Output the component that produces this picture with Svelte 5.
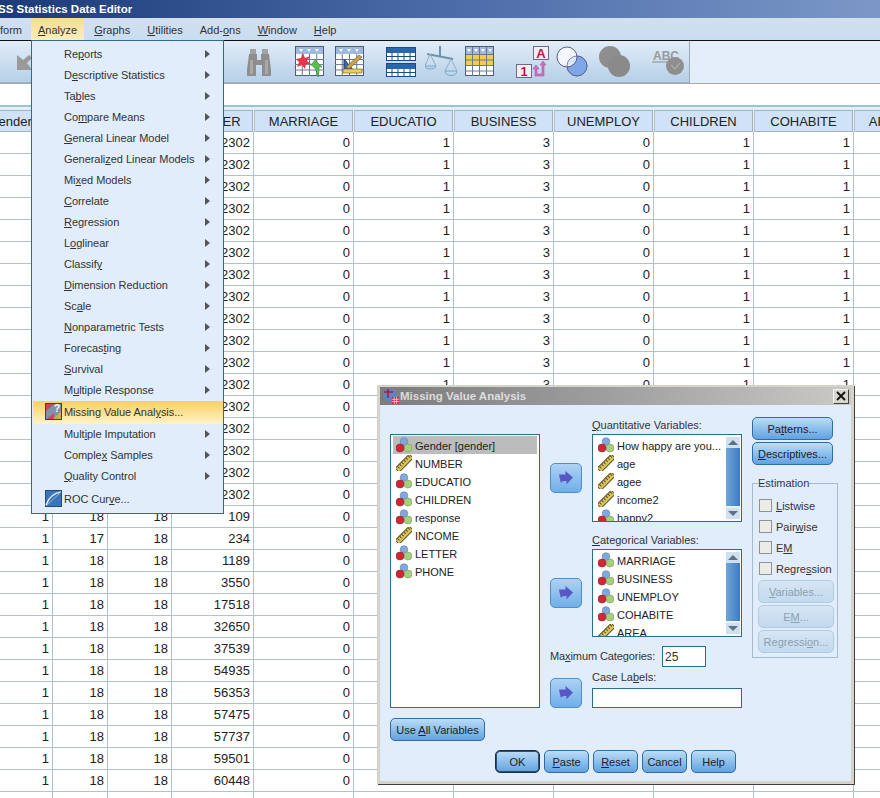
<script>
  const topMenu = ['&Graphs', '&Utilities', 'Add-&ons', '&Window', '&Help'];

  const analyze = [
    { label: 'Re&ports', sub: true },
    { label: 'D&escriptive Statistics', sub: true },
    { label: 'Ta&bles', sub: true },
    { label: 'Co&mpare Means', sub: true },
    { label: '&General Linear Model', sub: true },
    { label: 'Generali&zed Linear Models', sub: true },
    { label: 'Mi&xed Models', sub: true },
    { label: '&Correlate', sub: true },
    { label: '&Regression', sub: true },
    { label: 'L&oglinear', sub: true },
    { label: 'Classif&y', sub: true },
    { label: '&Dimension Reduction', sub: true },
    { label: 'Sc&ale', sub: true },
    { label: '&Nonparametric Tests', sub: true },
    { label: 'Forecas&ting', sub: true },
    { label: '&Survival', sub: true },
    { label: 'M&ultiple Response', sub: true },
    { label: 'Missing Value Anal&ysis...', active: true, icon: 'missing' },
    { label: 'Mult&iple Imputation', sub: true },
    { label: 'Comple&x Samples', sub: true },
    { label: '&Quality Control', sub: true },
    { label: 'ROC Cur&ve...', icon: 'roc' }
  ];

  const columns = ['gender', '', '', 'NUMBER', 'MARRIAGE', 'EDUCATIO', 'BUSINESS', 'UNEMPLOY', 'CHILDREN', 'COHABITE', 'AREA'];
  const widths = [82, 55, 64, 82, 100, 100, 100, 100, 100, 100, 66];
  const numbers = [
    ...Array(17).fill(2302),
    109, 234, 1189, 3550, 17518, 32650, 37539, 54935, 56353, 57475, 57737, 59501, 60448, 60675
  ];
  const rows = numbers.map((n) => [1, n === 234 ? 17 : 18, 18, n, 0, 1, 3, 0, 1, 1, '']);

  const source = [
    { name: 'Gender [gender]', kind: 'nominal', selected: true },
    { name: 'NUMBER', kind: 'scale' },
    { name: 'EDUCATIO', kind: 'nominal' },
    { name: 'CHILDREN', kind: 'nominal' },
    { name: 'response', kind: 'nominal' },
    { name: 'INCOME', kind: 'scale' },
    { name: 'LETTER', kind: 'nominal' },
    { name: 'PHONE', kind: 'nominal' }
  ];
  const quantitative = [
    { name: 'How happy are you...', kind: 'nominal' },
    { name: 'age', kind: 'scale' },
    { name: 'agee', kind: 'scale' },
    { name: 'income2', kind: 'scale' },
    { name: 'happy2', kind: 'nominal' }
  ];
  const categorical = [
    { name: 'MARRIAGE', kind: 'nominal' },
    { name: 'BUSINESS', kind: 'nominal' },
    { name: 'UNEMPLOY', kind: 'nominal' },
    { name: 'COHABITE', kind: 'nominal' },
    { name: 'AREA', kind: 'scale' }
  ];
  const estimation = ['&Listwise', 'Pair&wise', 'E&M', 'Regre&ssion'];
  const footer = ['OK', '&Paste', '&Reset', 'Cancel', 'Help'];

  // "Re&ports" -> Re, p, orts
  function split(label) {
    const i = label.indexOf('&');
    if (i < 0) return [label, '', ''];
    return [label.slice(0, i), label[i + 1], label.slice(i + 2)];
  }
</script>

{#snippet mn(label)}{split(label)[0]}<u>{split(label)[1]}</u>{split(label)[2]}{/snippet}

{#snippet varIcon(kind)}
  <svg class="var-icon" viewBox="0 0 16 16">
    {#if kind === 'scale'}
      <g transform="rotate(-45 8 8)">
        <rect x="-2" y="5.5" width="20" height="5.5" fill="#dcc45a" stroke="#5c5226" />
        <path d="M1 6v2.500M4 6v2.500M7 6v2.500M10 6v2.500M13 6v2.500M16 6v2.500" stroke="#5c5226" fill="none" />
      </g>
    {:else}
      <circle cx="8" cy="4.500" r="3.800" fill="#7fa8dc" stroke="#5b7fae" stroke-width="0.6" />
      <circle cx="12" cy="11" r="4" fill="#a6cf7c" stroke="#7c9f5a" stroke-width="0.6" />
      <circle cx="4" cy="11" r="4" fill="#cf2a34" stroke="#8e1f28" stroke-width="0.6" />
    {/if}
  </svg>
{/snippet}

{#snippet varRow(item)}
  <div class="var-row" class:selected={item.selected}>
    {@render varIcon(item.kind)}
    <span>{item.name}</span>
  </div>
{/snippet}

{#snippet scrollbar()}
  <div class="scrollbar">
    <div class="sb-btn"><i class="tri-up"></i></div>
    <div class="sb-thumb"></div>
    <div class="sb-btn"><i class="tri-down"></i></div>
  </div>
{/snippet}

{#snippet moveArrow()}
  <button class="arrow-btn" aria-label="Move">
    <svg viewBox="0 0 16 16" width="16" height="16">
      <path d="M1 4.500h6.500V1L15 7.500 8.500 14.500V11C6 11 4 11 3 13 2 10 1.500 7 1 4.500z" fill="#5858c4" />
    </svg>
  </button>
{/snippet}

{#snippet gridTable(head, w, h)}
  <rect x="0.5" y="0.5" width={w - 1} height={h - 1} fill="#fff" stroke="#4c5c72" />
  <rect x="1" y="1" width={w - 2} height="7" fill={head} />
  <path d="M{w * 0.25} 8V{h}M{w * 0.5} 8V{h}M{w * 0.75} 8V{h}M0 {h * 0.45}H{w}M0 {h * 0.62}H{w}M0 {h * 0.8}H{w}" stroke="#6a7a8c" fill="none" />
  <path d="M4 3h4l-2 3zM12 3h4l-2 3zM20 3h4l-2 3z" fill="#fff" />
{/snippet}

<div class="screen">
  <header class="titlebar"><span>SS Statistics Data Editor</span></header>

  <nav class="menubar">
    <span class="menu-item menu-cut">form</span>
    <span class="menu-item open">{@render mn('&Analyze')}</span>
    {#each topMenu as m}
      <span class="menu-item">{@render mn(m)}</span>
    {/each}
  </nav>

  <div class="toolstrip">
    <div class="toolbar">
      <svg class="tb-back" width="20" height="32" viewBox="0 0 20 32">
        <path d="M0 9l6 5 6-5 3 3-5 5 5 7H0z" fill="#9a9a9a" />
      </svg>
      <svg class="tb-find" width="24" height="32" viewBox="0 0 24 32">
        <path d="M2 8h8v6h4V8h8l2 16v6h-9V19h-6v11H0v-6z" fill="#8e8e8e" />
        <path d="M3 3h6v5H3zM15 3h6v5h-6z" fill="#a2a2a2" />
        <path d="M3 14h3v14H3zM18 14h3v14h-3z" fill="#a8a8a8" />
      </svg>
      <svg class="tb-star" width="30" height="32" viewBox="0 0 30 32">
        {@render gridTable('#9fb8de', 29, 30)}
        <path d="M8 7l2 5 5-2-3 5 4 3-5 0-1 5-3-4-5 2 2-5-3-3 5-1z" fill="#e8344a" />
        <path d="M23 31c-1-6-3-10-7-12l4-5 7 7h-3c0 3 0 6-1 10z" fill="#58c04a" stroke="#2e8a32" stroke-width="0.6" />
      </svg>
      <svg class="tb-ruler" width="30" height="32" viewBox="0 0 30 32">
        {@render gridTable('#9fb8de', 29, 30)}
        <path d="M9 25V13l10 12z" fill="#3f5fb4" stroke="#24407e" />
        <path d="M11 21L24 9l3 2-13 12z" fill="#c9a24c" stroke="#6a5226" stroke-width="0.6" />
        <rect x="8" y="23" width="19" height="4" fill="#e8cf58" stroke="#6a5a20" stroke-width="0.6" />
      </svg>
      <svg class="tb-split" width="30" height="32" viewBox="0 0 30 32">
        <rect x="0.5" y="1.500" width="29" height="13" fill="#fff" stroke="#1c4a86" />
        <rect x="1" y="2" width="28" height="5" fill="#2a66ac" />
        <rect x="0.5" y="17.500" width="29" height="13" fill="#fff" stroke="#1c4a86" />
        <rect x="1" y="18" width="28" height="5" fill="#2a66ac" />
        <path d="M6 7v7M12 7v7M18 7v7M24 7v7M6 23v7M12 23v7M18 23v7M24 23v7M1 10.500h28M1 26.500h28" stroke="#1c4a86" fill="none" />
      </svg>
      <svg class="tb-scale" width="32" height="32" viewBox="0 0 32 32">
        <path d="M2 8L28 13M15 0v10" stroke="#6f94a8" stroke-width="2" fill="none" />
        <path d="M5 8L0 20M5 8l6 12M26 13l-6 12M26 13l6 12" stroke="#8cb0c8" fill="none" />
        <path d="M0 20h11c0 4-11 4-11 0zM20 25h12c0 6-12 6-12 0z" fill="#b4d8f0" stroke="#7ea6c0" />
      </svg>
      <svg class="tb-yellow" width="30" height="32" viewBox="0 0 30 32">
        <rect x="0.5" y="0.500" width="28" height="29" fill="#fff" stroke="#4c5c72" />
        <rect x="1" y="1" width="27" height="7" fill="#9fb8de" />
        <rect x="1" y="9" width="27" height="10" fill="#f0cd50" />
        <path d="M7.500 1V30M14.500 1V30M21.500 1V30M1 8.500h27M1 14h27M1 19.500h27M1 25h27" stroke="#6a7a8c" fill="none" />
        <path d="M2 3h4l-2 3zM9 3h4l-2 3zM16 3h4l-2 3zM23 3h4l-2 3z" fill="#fff" />
      </svg>
      <svg class="tb-labels" width="33" height="32" viewBox="0 0 33 32">
        <rect x="17.500" y="0.500" width="15" height="13" fill="#f4eef4" stroke="#6a6a80" />
        <text x="25" y="11.500" class="tb-letter">A</text>
        <rect x="0.500" y="18.500" width="15" height="13" fill="#f4eef4" stroke="#6a6a80" />
        <text x="8" y="29.500" class="tb-letter">1</text>
        <path d="M27 15l3 4h-2v11h-9v-7l-2 0 3-4 3 4h-2v5h5V19h-2z" fill="#d070c0" stroke="#a44898" stroke-width="0.5" />
      </svg>
      <svg class="tb-venn" width="32" height="32" viewBox="0 0 32 32">
        <circle cx="21" cy="20" r="10" fill="#7ea6e8" stroke="#5a7cb8" />
        <circle cx="11" cy="11" r="10" fill="#fff" fill-opacity="0.75" stroke="#60608a" />
        <circle cx="21" cy="20" r="10" fill="none" stroke="#60608a" stroke-width="0.7" />
      </svg>
      <svg class="tb-gray" width="32" height="32" viewBox="0 0 32 32">
        <circle cx="11" cy="11" r="11" fill="#8e8e8e" />
        <circle cx="20" cy="20" r="11" fill="#8a8a8a" />
      </svg>
      <svg class="tb-abc" width="34" height="32" viewBox="0 0 34 32">
        <text x="1" y="14" class="tb-abc-text">ABC</text>
        <path d="M0 16h20" stroke="#8c8c8c" fill="none" />
        <circle cx="23" cy="20" r="9" fill="#8e8e8e" />
        <path d="M19 19l4 4 5-6" stroke="#a8a8a8" stroke-width="1.500" fill="none" />
      </svg>
    </div>
  </div>

  <div class="cell-strip"></div>

  <table class="sheet">
    <colgroup>
      {#each widths as w}
        <col style="width: {w}px" />
      {/each}
    </colgroup>
    <thead>
      <tr>
        {#each columns as c}
          <th><div class="head-cell">{c}</div></th>
        {/each}
      </tr>
    </thead>
    <tbody>
      {#each rows as row}
        <tr>
          {#each row as v}
            <td>{v}</td>
          {/each}
        </tr>
      {/each}
    </tbody>
  </table>

  <div class="analyze-menu">
    {#each analyze as item}
      <div class="analyze-item" class:active={item.active} class:last={item.icon === 'roc'}>
        {#if item.icon === 'missing'}
          <svg class="item-icon" viewBox="0 0 17 17">
            <rect x="0.500" y="0.500" width="16" height="16" fill="#7f92a8" stroke="#2b3f78" />
            <path d="M1 8L9 1H1zM2 16l7-6 0 6z" fill="#c8455a" />
            <path d="M8 16l8-8v8z" fill="#c4b04c" />
            <text x="12" y="8.500" class="item-q">?</text>
          </svg>
        {:else if item.icon === 'roc'}
          <svg class="item-icon" viewBox="0 0 17 17">
            <rect x="0.500" y="0.500" width="16" height="16" fill="#3c74b8" stroke="#1f4a86" />
            <path d="M1 15C4 7 9 3 16 2" stroke="#dcecfa" stroke-width="1.600" fill="none" />
            <path d="M1 16L16 2" stroke="#8ab4de" fill="none" />
          </svg>
        {/if}
        <span class="item-label">{@render mn(item.label)}</span>
        {#if item.sub}<i class="tri-right"></i>{/if}
      </div>
    {/each}
  </div>

  <section class="dialog">
    <div class="dialog-title">
      <svg class="dialog-logo" viewBox="0 0 16 16" width="16" height="16">
        <circle cx="7" cy="7" r="6.500" fill="#5a86c8" />
        <path d="M5 1v9M1 4h9" stroke="#a81c3c" stroke-width="1.600" fill="none" />
        <rect x="9" y="9" width="7" height="7" fill="#c82c4c" />
        <path d="M11.300 9v7M13.600 9v7M9 11.300h7M9 13.600h7" stroke="#fff" stroke-width="0.6" fill="none" />
      </svg>
      <span>Missing Value Analysis</span>
      <button class="close" aria-label="Close">
        <svg viewBox="0 0 10 10" width="10" height="10">
          <path d="M1 1l8 8M9 1L1 9" stroke="#111" stroke-width="1.800" fill="none" />
        </svg>
      </button>
    </div>

    <div class="dialog-body">
      <div class="source-col">
        <div class="var-list source">
          {#each source as item}
            {@render varRow(item)}
          {/each}
        </div>
        <button class="btn use-all">Use <u>A</u>ll Variables</button>
      </div>

      <div class="center-col">
        <div class="target-row first">
          {@render moveArrow()}
          <div class="target">
            <div class="field-label"><u>Q</u>uantitative Variables:</div>
            <div class="scroll-box">
              <div class="scroll-list">
                {#each quantitative as item}
                  {@render varRow(item)}
                {/each}
              </div>
              {@render scrollbar()}
            </div>
          </div>
        </div>

        <div class="target-row second">
          {@render moveArrow()}
          <div class="target">
            <div class="field-label"><u>C</u>ategorical Variables:</div>
            <div class="scroll-box">
              <div class="scroll-list">
                {#each categorical as item}
                  {@render varRow(item)}
                {/each}
              </div>
              {@render scrollbar()}
            </div>
          </div>
        </div>

        <div class="max-row">
          <span class="max-label">Ma<u>x</u>imum Categories:</span>
          <div class="text-input max-input">25</div>
        </div>

        <div class="target-row third">
          {@render moveArrow()}
          <div class="target">
            <div class="field-label">Case La<u>b</u>els:</div>
            <div class="text-input case-input"></div>
          </div>
        </div>
      </div>

      <div class="side-col">
        <button class="btn side-btn">Pa<u>t</u>terns...</button>
        <button class="btn side-btn"><u>D</u>escriptives...</button>
        <fieldset class="estimation">
          <legend>Estimation</legend>
          {#each estimation as e}
            <div class="check-row">
              <span class="check"></span>
              <span>{@render mn(e)}</span>
            </div>
          {/each}
          <button class="btn disabled first-off"><u>V</u>ariables...</button>
          <button class="btn disabled">E<u>M</u>...</button>
          <button class="btn disabled">Regressi<u>o</u>n...</button>
        </fieldset>
      </div>
    </div>

    <div class="dialog-footer">
      {#each footer as f}
        <button class="btn foot-btn" class:default={f === 'OK'}>{@render mn(f)}</button>
      {/each}
    </div>
  </section>
</div>

<style>
  :global(body) {
    margin: 0;
    background: #fff;
  }

  .screen {
    position: relative;
    width: 880px;
    height: 798px;
    overflow: hidden;
    font-family: "Liberation Sans", Arial, sans-serif;
    font-size: 11px;
    color: #222;
  }

  u {
    text-underline-offset: 1px;
  }

  .titlebar {
    height: 18px;
    line-height: 18px;
    background: linear-gradient(90deg, #1c3a78, #4a6aa8 50%, #7c98c8);
    color: #fff;
    font-weight: bold;
    font-size: 11.500px;
    overflow: hidden;
  }

  .titlebar span {
    display: block;
    margin-left: -2px;
    white-space: nowrap;
  }

  .menubar {
    display: flex;
    height: 22px;
    line-height: 25px;
    background: linear-gradient(180deg, #d2e0ee, #c9ddf1);
    padding-left: 31px;
    position: relative;
    gap: 3px;
  }

  .menu-item {
    padding: 0 7px;
    color: #333;
  }

  .menu-item.open {
    background: linear-gradient(180deg, #f7dc90, #fdeebc);
  }

  .menu-cut {
    position: absolute;
    left: 0;
    padding: 0;
  }

  .toolstrip {
    height: 44px;
    border-top: 1px solid #111;
    border-bottom: 1px solid #a8a8a8;
    box-sizing: border-box;
    background: #e4eef8;
  }

  .toolbar {
    width: 690px;
    height: 42px;
    box-sizing: border-box;
    border-right: 1px solid #9aa8b8;
    border-bottom: 1px solid #9fb3c8;
    background: linear-gradient(180deg, #e2edf8, #b6cfe8);
    display: flex;
    align-items: center;
    padding-left: 17px;
  }

  .toolbar svg {
    flex: none;
  }

  .tb-find { margin-left: 210px; }
  .tb-star { margin-left: 24px; }
  .tb-ruler { margin-left: 10px; }
  .tb-split { margin-left: 21px; }
  .tb-scale { margin-left: 9px; }
  .tb-yellow { margin-left: 8px; }
  .tb-labels { margin-left: 21px; }
  .tb-venn { margin-left: 7px; }
  .tb-gray { margin-left: 11px; }
  .tb-abc { margin-left: 21px; }

  .tb-letter {
    font-size: 13px;
    font-weight: bold;
    fill: #c8104c;
    text-anchor: middle;
    font-family: "Liberation Sans", sans-serif;
  }

  .tb-abc-text {
    font-size: 12px;
    font-weight: bold;
    fill: #9a9a9a;
    font-family: "Liberation Sans", sans-serif;
  }

  .cell-strip {
    height: 23px;
    background: #fff;
    border-bottom: 2px solid #9cc4d4;
    box-sizing: border-box;
  }

  .sheet {
    table-layout: fixed;
    border-collapse: separate;
    border-spacing: 0;
    width: 949px;
    margin-left: -29px;
    font-size: 13px;
    color: #222;
  }

  .sheet th {
    height: 22px;
    padding: 3px 0 0;
    background: #e4eef8;
    font-weight: normal;
    vertical-align: top;
    overflow: hidden;
  }

  .head-cell {
    height: 20px;
    line-height: 22px;
    margin-right: 1px;
    border: 1px solid #a5b0ba;
    border-left-color: #b6c0ca;
    background: #cfe2f8;
    text-align: center;
    white-space: nowrap;
    overflow: hidden;
  }

  .sheet td {
    height: 21px;
    padding: 0 3px 0 0;
    text-align: right;
    border-right: 1px solid #aec3d2;
    border-bottom: 1px solid #aec3d2;
    line-height: 21px;
    overflow: hidden;
    white-space: nowrap;
  }

  .analyze-menu {
    position: absolute;
    left: 31px;
    top: 40px;
    width: 190px;
    height: 469px;
    padding: 3px 0 0 1px;
    border: 1px solid #2c6c8c;
    background: #e1edfa;
    letter-spacing: -0.04px;
  }

  .analyze-item {
    position: relative;
    height: 21px;
    line-height: 21px;
    padding-left: 31px;
    white-space: nowrap;
    color: #333;
  }

  .analyze-item.active {
    height: 23px;
    line-height: 22px;
    background: linear-gradient(180deg, #f9cf62, #fde9a8 70%, #fdf2cc);
  }

  .analyze-item.last {
    margin-top: 1px;
    height: 23px;
    line-height: 23px;
  }

  .item-icon {
    position: absolute;
    left: 12px;
    top: 2px;
    width: 17px;
    height: 17px;
  }

  .item-q {
    font-size: 10px;
    font-weight: bold;
    fill: #fff;
    text-anchor: middle;
    font-family: "Liberation Sans", sans-serif;
  }

  .tri-right {
    position: absolute;
    left: 172px;
    top: 6px;
    border-left: 5px solid #555;
    border-top: 4px solid transparent;
    border-bottom: 4px solid transparent;
  }

  .dialog {
    position: absolute;
    left: 377px;
    top: 385px;
    width: 477px;
    height: 399px;
    box-sizing: border-box;
    border: 3px solid #d6d3c9;
    border-top-width: 2px;
    box-shadow: 1px 1px 0 #404040;
    background: #e1edfa;
    display: flex;
    flex-direction: column;
  }

  .dialog-title {
    flex: none;
    height: 18px;
    display: flex;
    align-items: center;
    gap: 1px;
    padding-left: 3px;
    background: linear-gradient(90deg, #7c7c7c, #a0a0a0 50%, #cbc9c5);
    color: #dcdcdc;
    font-weight: bold;
    font-size: 11.500px;
  }

  .dialog-logo {
    flex: none;
  }

  .close {
    margin-left: auto;
    margin-right: 2px;
    width: 16px;
    height: 15px;
    padding: 0;
    display: flex;
    align-items: center;
    justify-content: center;
    background: #d8d6ce;
    border: 1px solid;
    border-color: #f4f4f0 #404040 #404040 #f4f4f0;
  }

  .dialog-body {
    flex: none;
    display: flex;
    padding-left: 10px;
    height: 345px;
  }

  .source-col {
    width: 150px;
    padding-top: 29px;
  }

  .var-list {
    box-sizing: border-box;
    background: #fff;
    border: 1px solid #2c6c8c;
  }

  .source {
    height: 274px;
    padding: 1px 2px;
  }

  .var-row {
    display: flex;
    align-items: center;
    height: 18px;
    padding-left: 3px;
    gap: 3px;
    white-space: nowrap;
    color: #222;
    flex: none;
  }

  .var-row span {
    padding-top: 2px;
  }

  .var-row.selected {
    background: #bcbcbc;
  }

  .var-icon {
    width: 16px;
    height: 16px;
    flex: none;
  }

  .btn {
    font: inherit;
    color: #222;
    height: 23px;
    padding: 0;
    border: 1px solid #2f6f9f;
    border-radius: 5px;
    background: linear-gradient(180deg, #bcdcf6, #88bdec 55%, #62a2e2);
    white-space: nowrap;
  }

  .use-all {
    margin-top: 10px;
    width: 95px;
  }

  .center-col {
    width: 192px;
    margin-left: 10px;
    padding-top: 13px;
    display: flex;
    flex-direction: column;
  }

  .target-row {
    display: flex;
    gap: 10px;
  }

  .second {
    margin-top: 11px;
  }

  .third {
    align-items: flex-end;
    margin-top: 3px;
  }

  .arrow-btn {
    flex: none;
    width: 32px;
    height: 30px;
    padding: 0;
    display: flex;
    align-items: center;
    justify-content: center;
    border: 1px solid #4f8fc4;
    border-radius: 5px;
    background: linear-gradient(180deg, #aed2f4, #70aeea);
  }

  .first > .arrow-btn,
  .second > .arrow-btn {
    margin-top: 45px;
  }

  .target {
    width: 150px;
  }

  .field-label {
    height: 16px;
    line-height: 15px;
    white-space: nowrap;
    color: #333;
  }

  .scroll-box {
    box-sizing: border-box;
    height: 88px;
    display: flex;
    background: #fff;
    border: 1px solid #2c6c8c;
    overflow: hidden;
  }

  .scroll-list {
    flex: 1;
    min-width: 0;
    padding-top: 1px;
    overflow: hidden;
    padding-left: 2px;
  }

  .scrollbar {
    flex: none;
    width: 14px;
    margin: 2px 1px 2px 0;
    display: flex;
    flex-direction: column;
  }

  .sb-btn {
    flex: none;
    height: 11px;
    display: flex;
    align-items: center;
    justify-content: center;
    background: #cfe0f0;
  }

  .sb-thumb {
    flex: 1;
    background: linear-gradient(90deg, #6fa6dc, #3d7cc0);
    border-bottom: 2px solid #e8f0f8;
  }

  .tri-up,
  .tri-down {
    border-left: 5px solid transparent;
    border-right: 5px solid transparent;
  }

  .tri-up {
    border-bottom: 5px solid #607080;
  }

  .tri-down {
    border-top: 5px solid #607080;
  }

  .max-row {
    display: flex;
    align-items: center;
    margin-top: 9px;
    gap: 7px;
    white-space: nowrap;
    color: #333;
  }

  .max-label {
    width: 105px;
    margin-bottom: 2px;
    letter-spacing: -0.1px;
  }

  .text-input {
    box-sizing: border-box;
    background: #fff;
    border: 1px solid #2c6c8c;
  }

  .max-input {
    width: 44px;
    height: 21px;
    line-height: 21px;
    padding-left: 2px;
    font-size: 12px;
  }

  .case-input {
    width: 150px;
    height: 20px;
    margin-top: 2px;
  }

  .side-col {
    margin-left: 10px;
    width: 86px;
    padding-top: 12px;
    display: flex;
    flex-direction: column;
  }

  .side-btn {
    width: 81px;
    margin-bottom: 2px;
  }

  .estimation {
    box-sizing: border-box;
    width: 86px;
    height: 180px;
    margin: 11px 0 0;
    padding: 6px 0 0 6px;
    border: 1px solid #a6bccc;
    color: #333;
  }

  .estimation legend {
    padding: 0;
    margin-left: -1px;
    color: #335;
    font-size: 11px;
    line-height: 11px;
  }

  .check-row {
    display: flex;
    align-items: center;
    height: 21px;
    gap: 4px;
    white-space: nowrap;
  }

  .check {
    width: 11px;
    height: 11px;
    background: #ecebe6;
    border: 1px solid #8c9498;
    flex: none;
  }

  .btn.disabled {
    display: block;
    width: 76px;
    margin: 0 0 2px -1px;
    color: #8ba0b0;
    border-color: #b0cce0;
    background: linear-gradient(180deg, #d6e6f4, #c2d9ee);
  }

  .btn.disabled.first-off {
    margin-top: 1px;
  }

  .dialog-footer {
    flex: none;
    display: flex;
    gap: 4px;
    padding-left: 115px;
  }

  .foot-btn {
    width: 45px;
  }

  .foot-btn.default {
    border: 1px solid #1a2f48;
    box-shadow: inset 0 0 0 1px #30506c;
  }
</style>
